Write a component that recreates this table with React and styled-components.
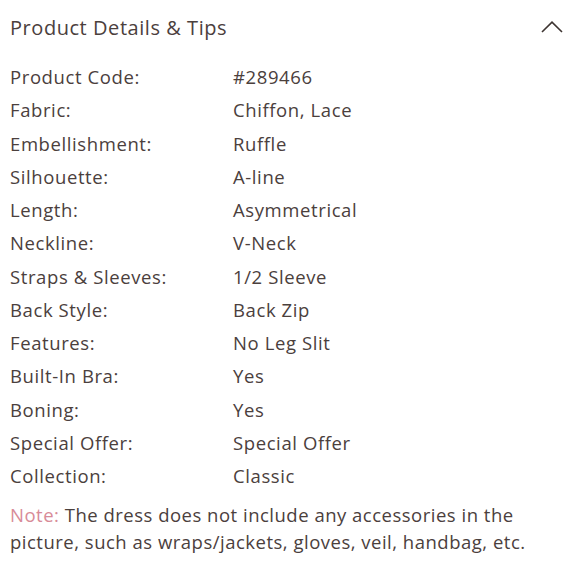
import React from 'react';
import styled, { createGlobalStyle } from 'styled-components';

const GlobalStyle = createGlobalStyle`
  body {
    margin: 0;
    background: #ffffff;
    font-family: 'Open Sans', 'Liberation Sans', sans-serif;
    color: #4b403d;
  }
`;

const Panel = styled.div`
  width: 580px;
  height: 580px;
  box-sizing: border-box;
  padding: 12px 10px 0 10px;
`;

const Header = styled.div`
  display: flex;
  align-items: center;
  justify-content: space-between;
  height: 30px;
`;

const Title = styled.h2`
  margin: 0;
  font-size: 20px;
  font-weight: 400;
  letter-spacing: 0.55px;
`;

const Toggle = styled.button`
  border: 0;
  background: none;
  padding: 0;
  margin-right: 7px;
  display: flex;
  color: #3d3431;
`;

const Specs = styled.dl`
  margin: 18px 0 0 0;
  display: grid;
  grid-template-columns: 223px 1fr;
  grid-auto-rows: 33.25px;
  align-items: center;
  font-size: 18.5px;
  letter-spacing: 0.6px;
`;

const Label = styled.dt`
  margin: 0;
`;

const Value = styled.dd`
  margin: 0;
`;

const Note = styled.p`
  margin: 10px 0 0 0;
  max-width: 530px;
  font-size: 18.5px;
  line-height: 26.5px;
  letter-spacing: 0.5px;
`;

const NoteTag = styled.span`
  color: #d88b98;
`;

const specs = [
  ['Product Code:', '#289466'],
  ['Fabric:', 'Chiffon, Lace'],
  ['Embellishment:', 'Ruffle'],
  ['Silhouette:', 'A-line'],
  ['Length:', 'Asymmetrical'],
  ['Neckline:', 'V-Neck'],
  ['Straps & Sleeves:', '1/2 Sleeve'],
  ['Back Style:', 'Back Zip'],
  ['Features:', 'No Leg Slit'],
  ['Built-In Bra:', 'Yes'],
  ['Boning:', 'Yes'],
  ['Special Offer:', 'Special Offer'],
  ['Collection:', 'Classic'],
];

const App = () => (
  <Panel>
    <GlobalStyle />
    <Header>
      <Title>Product Details &amp; Tips</Title>
      <Toggle aria-label="Collapse">
        <svg width="22" height="12" viewBox="0 0 22 12" fill="none">
          <path d="M1 11 L11 1.2 L21 11" stroke="currentColor" strokeWidth="1.6" />
        </svg>
      </Toggle>
    </Header>
    <Specs>
      {specs.map(([k, v]) => (
        <React.Fragment key={k}>
          <Label>{k}</Label>
          <Value>{v}</Value>
        </React.Fragment>
      ))}
    </Specs>
    <Note>
      <NoteTag>Note:</NoteTag> The dress does not include any accessories in the
      picture, such as wraps/jackets, gloves, veil, handbag, etc.
    </Note>
  </Panel>
);

export default App;
